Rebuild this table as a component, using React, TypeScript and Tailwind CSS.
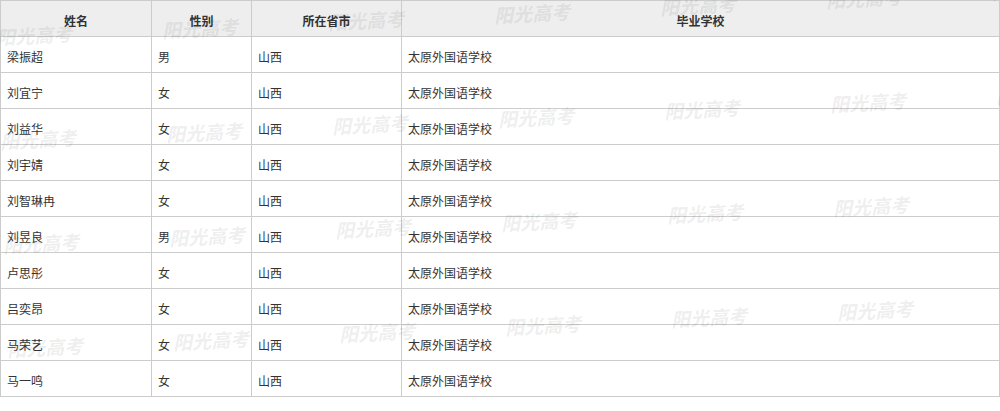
const rows = [
  { name: '梁振超', sex: '男' },
  { name: '刘宜宁', sex: '女' },
  { name: '刘益华', sex: '女' },
  { name: '刘宇婧', sex: '女' },
  { name: '刘智琳冉', sex: '女' },
  { name: '刘昱良', sex: '男' },
  { name: '卢思彤', sex: '女' },
  { name: '吕奕昂', sex: '女' },
  { name: '马荣艺', sex: '女' },
  { name: '马一鸣', sex: '女' },
];

// watermark grid: each column drifts up a little, each row drifts right
const marks: { x: number; y: number }[] = [];
for (let c = -1; c < 7; c++) {
  for (let r = 0; r < 4; r++) {
    marks.push({ x: -4 + c * 166 + r * 3.5, y: 25 + r * 104 - c * 7.5 });
  }
}

export default function App() {
  return (
    <div className="relative w-[1000px] h-[411px] overflow-hidden bg-white font-['Noto_Sans_CJK_SC',sans-serif] text-[12px] text-[#333]">
      <table className="table-fixed border-collapse w-[1000px]">
        <colgroup>
          <col className="w-[151px]" />
          <col className="w-[100px]" />
          <col className="w-[150px]" />
          <col />
        </colgroup>
        <thead>
          <tr className="h-[36px] bg-[#eeeeee]">
            <th className="border border-[#cccccc] pt-[5px] font-bold text-center">姓名</th>
            <th className="border border-[#cccccc] pt-[5px] font-bold text-center">性别</th>
            <th className="border border-[#cccccc] pt-[5px] font-bold text-center">所在省市</th>
            <th className="border border-[#cccccc] pt-[5px] font-bold text-center">毕业学校</th>
          </tr>
        </thead>
        <tbody>
          {rows.map((r) => (
            <tr key={r.name} className="h-[36px]">
              <td className="border border-[#cccccc] pl-[6px] pt-[5px]">{r.name}</td>
              <td className="border border-[#cccccc] pl-[6px] pt-[5px]">{r.sex}</td>
              <td className="border border-[#cccccc] pl-[6px] pt-[5px]">山西</td>
              <td className="border border-[#cccccc] pl-[6px] pt-[5px]">太原外国语学校</td>
            </tr>
          ))}
        </tbody>
      </table>
      <div className="pointer-events-none absolute inset-0">
        {marks.map((m, i) => (
          <span
            key={i}
            className="absolute -rotate-3 whitespace-nowrap text-[19px] leading-[20px] font-black italic text-black/[0.065]"
            style={{ left: m.x, top: m.y }}
          >
            阳光高考
          </span>
        ))}
      </div>
    </div>
  );
}
